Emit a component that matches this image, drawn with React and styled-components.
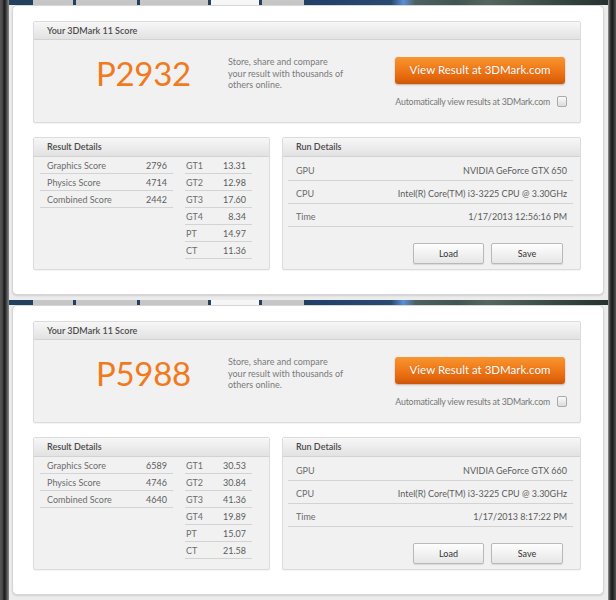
import React from 'react';
import styled, { createGlobalStyle } from 'styled-components';

const GlobalStyle = createGlobalStyle`
  html, body {
    margin: 0;
    padding: 0;
    background: #e9e9e9;
  }
  body {
    font-family: Lato, "Open Sans", sans-serif;
  }
`;

const runs = [
  {
    score: 'P2932',
    gpu: 'NVIDIA GeForce GTX 650',
    time: '1/17/2013 12:56:16 PM',
    scores: [['Graphics Score', '2796'], ['Physics Score', '4714'], ['Combined Score', '2442']],
    tests: [['GT1', '13.31'], ['GT2', '12.98'], ['GT3', '17.60'], ['GT4', '8.34'], ['PT', '14.97'], ['CT', '11.36']],
  },
  {
    score: 'P5988',
    gpu: 'NVIDIA GeForce GTX 660',
    time: '1/17/2013 8:17:22 PM',
    scores: [['Graphics Score', '6589'], ['Physics Score', '4746'], ['Combined Score', '4640']],
    tests: [['GT1', '30.53'], ['GT2', '30.84'], ['GT3', '41.36'], ['GT4', '19.89'], ['PT', '15.07'], ['CT', '21.58']],
  },
];

const tabs = [
  { w: 40 },
  { w: 61 },
  { w: 68 },
  { w: 48, active: true },
  { w: 42 },
];

const Page = styled.div`
  width: 616px;
  height: 600px;
  display: flex;
  flex-direction: column;
  overflow: hidden;
`;

const Screen = styled.div`
  display: flex;
  height: 300px;
`;

const Frame = styled.div`
  flex: 0 0 ${p => p.$w}px;
  background: ${p => p.$right
    ? 'linear-gradient(90deg, #9a9a9a 0, #3a3a3a 25%, #1b1b1b 55%, #555 100%)'
    : 'linear-gradient(90deg, #575757 0, #4a4a4a 25%, #1c1c1c 45%, #2a2a2a 60%, #8a8a8a 100%)'};
`;

const Center = styled.div`
  flex: 1;
  display: flex;
  flex-direction: column;
  background: #ececec;
`;

const TabStrip = styled.div`
  display: flex;
  height: 5px;
  flex-shrink: 0;
  background: #24405f;
`;

const Lead = styled.div`
  flex: 0 0 24px;
`;

const Tab = styled.div`
  flex: 0 0 ${p => p.$w}px;
  margin-right: 3px;
  background: ${p => (p.$active ? '#f6f6f6' : '#c6c6c6')};
`;

const Scene = styled.div`
  flex: 1;
  background: linear-gradient(90deg, #22406a 0, #2a4a70 28%, #5b8fd6 32%, #4d6260 36%, #415652 50%, #56675f 60%, #3a4c47 80%, #26322f 100%);
`;

const Card = styled.div`
  flex: 1;
  margin: 0 4px 5px 3px;
  padding: 15px 22px 0 20px;
  background: #fff;
  border: 1px solid #d6d6d6;
  border-radius: 5px;
  box-shadow: 0 1px 2px rgba(0, 0, 0, 0.12);
`;

const Panel = styled.div`
  width: ${p => (p.$w ? `${p.$w}px` : 'auto')};
  height: ${p => p.$h}px;
  box-sizing: border-box;
  display: flex;
  flex-direction: column;
  background: #f1f1f1;
  border: 1px solid #dcdcdc;
  border-radius: 2px;
  box-shadow: 0 1px 1px rgba(0, 0, 0, 0.05);
`;

const PanelHeader = styled.div`
  height: ${p => p.$h}px;
  line-height: ${p => p.$h}px;
  padding-left: 13px;
  flex-shrink: 0;
  font-size: 9px;
  font-weight: 600;
  color: #4b4b4b;
  background: linear-gradient(#f7f7f7, #e2e2e2);
  border-bottom: 1px solid #d2d2d2;
`;

const ScoreBody = styled.div`
  flex: 1;
  display: grid;
  grid-template-columns: 194px 167px 1fr;
`;

const ScoreValue = styled.div`
  padding: 14px 0 0 62px;
  font-size: 33px;
  line-height: 38px;
  color: #f07a1c;
  letter-spacing: -0.3px;
`;

const Blurb = styled.div`
  padding-top: 16px;
  font-size: 9px;
  line-height: 11.5px;
  color: #7a7a7a;
`;

const Actions = styled.div`
  padding-top: 17px;
  display: flex;
  flex-direction: column;
  align-items: flex-start;
`;

const OrangeButton = styled.div`
  width: 170px;
  height: 27px;
  line-height: 26px;
  text-align: center;
  font-size: 11.5px;
  color: #fff;
  border-radius: 3px;
  background: linear-gradient(#f7962f 0, #f07a1a 45%, #e2650c 80%, #c9560a 100%);
  box-shadow: 0 1px 2px rgba(120, 50, 0, 0.35);
  text-shadow: 0 0 1px rgba(150, 60, 0, 0.4);
`;

const AutoRow = styled.div`
  width: 172px;
  margin-top: 12px;
  display: flex;
  justify-content: flex-end;
  align-items: center;
  gap: 7px;
  font-size: 8.8px;
  letter-spacing: -0.2px;
  white-space: nowrap;
  color: #777;
`;

const Check = styled.div`
  flex-shrink: 0;
  width: 8px;
  height: 9px;
  border: 1px solid #a9a9a9;
  border-radius: 2px;
  background: linear-gradient(#fafafa, #dcdcdc);
`;

const DetailsRow = styled.div`
  display: flex;
  gap: 12px;
  margin-top: 14px;
`;

const ResultBody = styled.div`
  display: flex;
  gap: 12px;
  padding-left: 6px;
`;

const Table = styled.div`
  width: ${p => p.$w}px;
  display: flex;
  flex-direction: column;
`;

const Row = styled.div`
  height: ${p => p.$h}px;
  box-sizing: border-box;
  display: flex;
  justify-content: space-between;
  align-items: center;
  padding: ${p => p.$pt || 0}px 6px 0 ${p => p.$pl}px;
  font-size: 9px;
  color: #6c6c6c;
  border-bottom: 1px solid #d3d3d3;
`;

const Value = styled.span`
  color: #5c5c5c;
`;

const RunBody = styled.div`
  display: flex;
  flex-direction: column;
  padding: 1px 7px 0 5px;
`;

const ButtonRow = styled.div`
  display: flex;
  justify-content: flex-end;
  gap: 7px;
  margin-top: 16px;
  padding-right: 10px;
`;

const GrayButton = styled.div`
  width: ${p => p.$w}px;
  height: 19px;
  line-height: 19px;
  text-align: center;
  font-size: 9px;
  color: #333;
  background: linear-gradient(#fefefe, #e6e6e6);
  border: 1px solid #b9b9b9;
  border-radius: 2px;
  box-shadow: 0 1px 1px rgba(0, 0, 0, 0.1);
`;

function ResultScreen({ run }) {
  return (
    <Screen>
      <Frame $w={9} />
      <Center>
        <TabStrip>
          <Lead />
          {tabs.map((t, i) => (
            <Tab key={i} $w={t.w} $active={t.active} />
          ))}
          <Scene />
        </TabStrip>
        <Card>
          <Panel $h={102}>
            <PanelHeader $h={17}>Your 3DMark 11 Score</PanelHeader>
            <ScoreBody>
              <ScoreValue>{run.score}</ScoreValue>
              <Blurb>
                Store, share and compare<br />
                your result with thousands of<br />
                others online.
              </Blurb>
              <Actions>
                <OrangeButton>View Result at 3DMark.com</OrangeButton>
                <AutoRow>
                  Automatically view results at 3DMark.com
                  <Check />
                </AutoRow>
              </Actions>
            </ScoreBody>
          </Panel>
          <DetailsRow>
            <Panel $w={237} $h={133}>
              <PanelHeader $h={18}>Result Details</PanelHeader>
              <ResultBody>
                <Table $w={133}>
                  {run.scores.map(([k, v]) => (
                    <Row key={k} $h={17} $pl={7}>
                      {k}
                      <Value>{v}</Value>
                    </Row>
                  ))}
                </Table>
                <Table $w={67}>
                  {run.tests.map(([k, v]) => (
                    <Row key={k} $h={17} $pl={1}>
                      {k}
                      <Value>{v}</Value>
                    </Row>
                  ))}
                </Table>
              </ResultBody>
            </Panel>
            <Panel $w={299} $h={133}>
              <PanelHeader $h={18}>Run Details</PanelHeader>
              <RunBody>
                <Row $h={23} $pt={3} $pl={8}>GPU<Value>{run.gpu}</Value></Row>
                <Row $h={23} $pt={3} $pl={8}>CPU<Value>Intel(R) Core(TM) i3-3225 CPU @ 3.30GHz</Value></Row>
                <Row $h={23} $pt={3} $pl={8}>Time<Value>{run.time}</Value></Row>
                <ButtonRow>
                  <GrayButton $w={69}>Load</GrayButton>
                  <GrayButton $w={70}>Save</GrayButton>
                </ButtonRow>
              </RunBody>
            </Panel>
          </DetailsRow>
        </Card>
      </Center>
      <Frame $w={8} $right />
    </Screen>
  );
}

export default function App() {
  return (
    <>
      <GlobalStyle />
      <Page>
        {runs.map(run => (
          <ResultScreen key={run.score} run={run} />
        ))}
      </Page>
    </>
  );
}
